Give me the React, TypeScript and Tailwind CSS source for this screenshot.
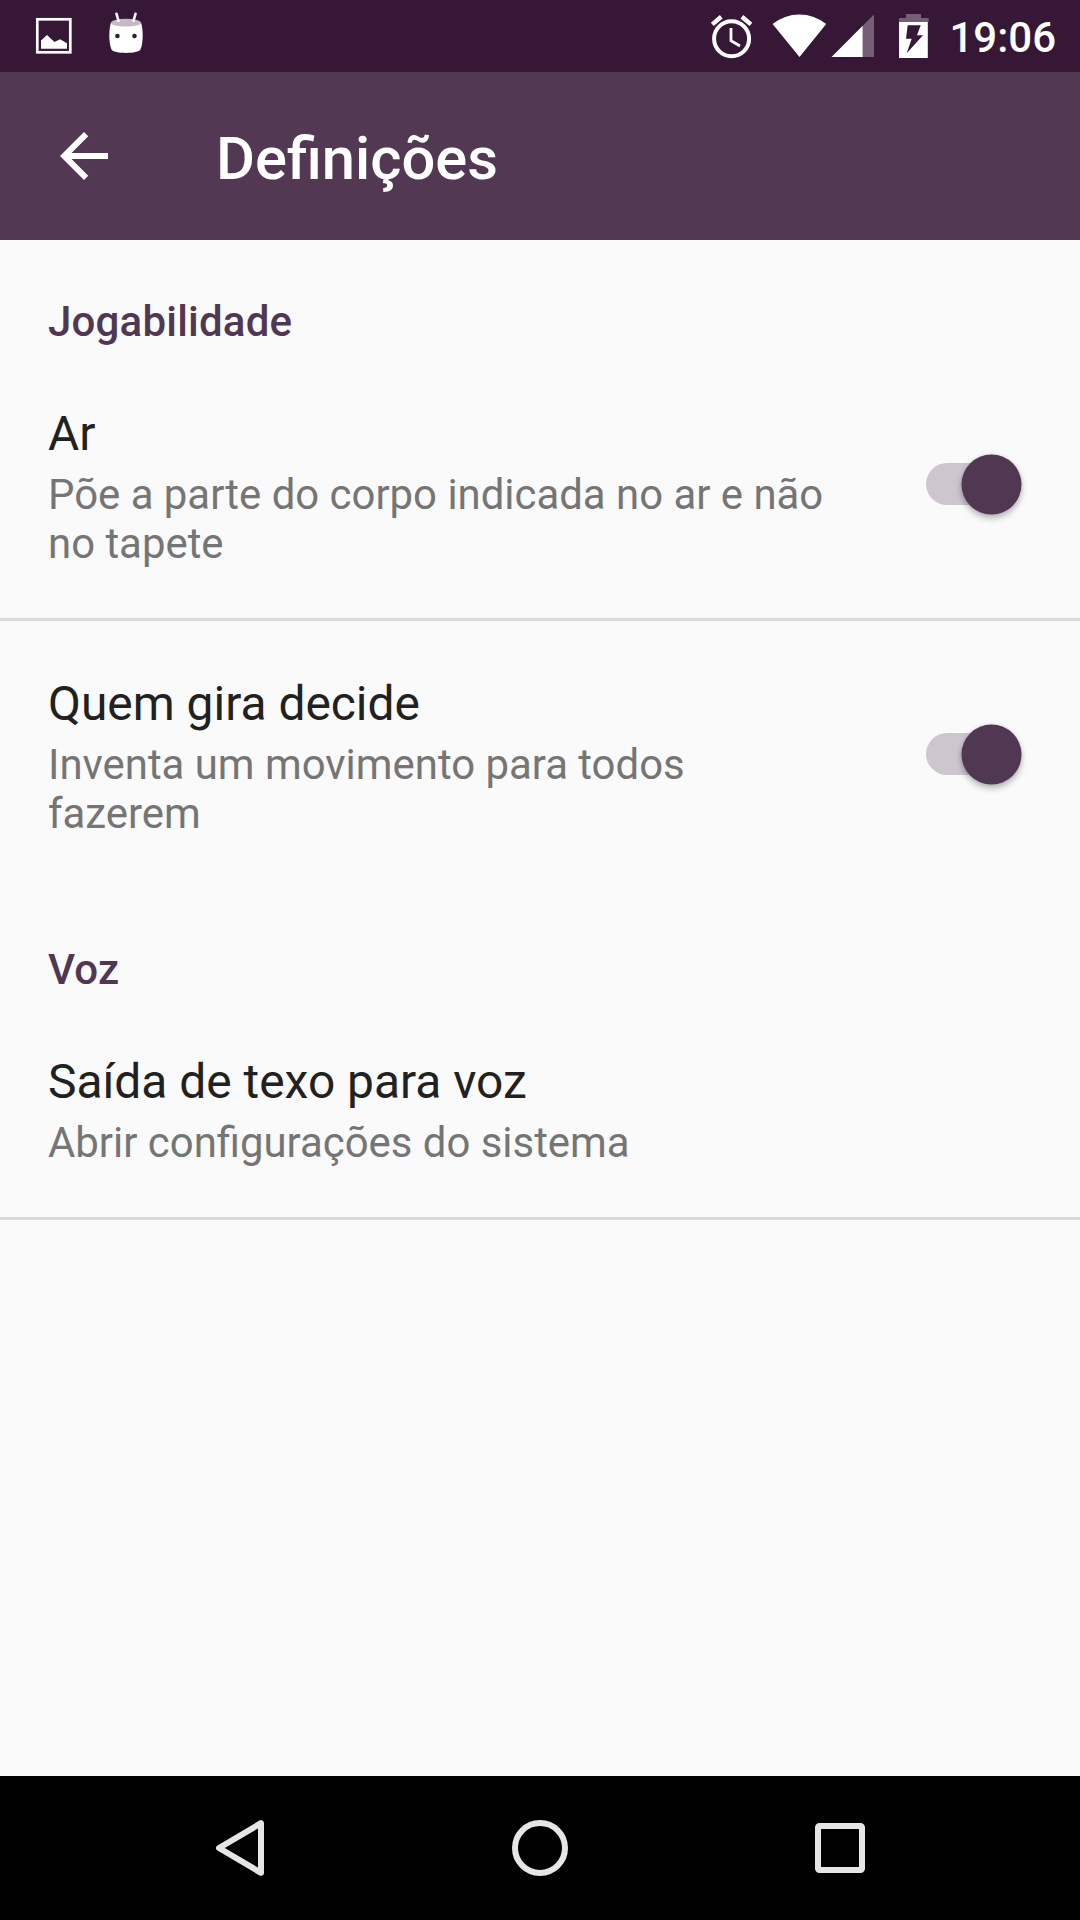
import React from 'react';

function StatusBar() {
  return (
    <div className="flex h-[72px] items-start justify-between bg-[#371736]">
      <div className="flex gap-[34px] pl-[34px]">
        <svg className="h-[72px] w-10" viewBox="34 0 40 72">
          <rect x="37.3" y="19.3" width="33" height="33" fill="none" stroke="#fff" strokeWidth="2.7" />
          <path d="M41 48.7V40.5L47 35l7.5 7 5.5-2.7 7 4v5.4z" fill="#fff" />
        </svg>
        <svg className="h-[72px] w-9" viewBox="108 0 36 72">
          <path
            d="M111 22.5C109 28 108.3 42 111.5 49.5C113.5 54 138.5 54 140.5 49.5C143.7 42 143 28 141 22.5z"
            fill="#fff"
          />
          <ellipse cx="126" cy="22.7" rx="15" ry="3.9" fill="#c4b9c4" />
          <path d="M116.5 13.8l2 7M135.5 13.8l-2 7" stroke="#fff" strokeWidth="2.6" strokeLinecap="round" />
          <circle cx="117.4" cy="36" r="2.3" fill="#2c2230" />
          <circle cx="134.5" cy="36" r="2.3" fill="#2c2230" />
        </svg>
      </div>
      <div className="flex pr-6">
        <svg className="h-[72px] w-[240px]" viewBox="709 0 240 72">
          <g fill="none" stroke="#fff">
            <circle cx="731.6" cy="38.7" r="17.5" strokeWidth="4" />
            <path d="M731 28v12.8l9 5.2" strokeWidth="2.8" />
            <path d="M712.3 24.4l9-7.6M750.9 24.4l-9-7.6" strokeWidth="4.4" />
          </g>
          <path d="M799.5 57L772.6 24A42.5 42.5 0 0 1 826.2 24z" fill="#fff" />
          <path d="M862.7 57V25.8L874 14.5V57z" fill="#765f76" />
          <path d="M831.5 57L862.7 25.8V57z" fill="#fff" />
          <path d="M899 22V18h7V14h15v4h7.7v4z" fill="#765f76" />
          <path
            d="M899 22h28.8v36H899zM907.7 25.3L906 38.7h5.7L906.7 53.3L923 35.3h-6L920.7 25.3z"
            fill="#fff"
            fillRule="evenodd"
          />
        </svg>
        <span className="pt-[13px] text-[42px] leading-[49px] font-medium text-white">19:06</span>
      </div>
    </div>
  );
}

function AppBar() {
  return (
    <header className="flex h-[168px] items-center bg-[#533854] pl-12">
      <svg className="mr-24 size-[72px]" viewBox="0 0 24 24" fill="#fff">
        <path d="M20 11H7.83l5.59-5.59L12 4l-8 8 8 8 1.41-1.41L7.83 13H20v-2z" />
      </svg>
      <h1 className="pt-[7px] text-[59.7px] leading-[71px] font-medium text-white">Definições</h1>
    </header>
  );
}

function SectionTitle({ children }: { children: React.ReactNode }) {
  return (
    <h2 className="px-12 pt-[57px] pb-[5px] text-[42px] leading-[49px] font-medium tracking-[0.2px] text-[#503752]">
      {children}
    </h2>
  );
}

function Switch() {
  return (
    <div role="switch" aria-checked="true" className="relative mr-[11px] mb-px h-[60px] w-[95px]">
      <div className="absolute top-[9px] left-0 h-[42px] w-[84px] rounded-full bg-[#cdc6cf]" />
      <div className="absolute top-0 right-0 size-[60px] translate-x-[0.5px] translate-y-[0.5px] rounded-full bg-[#503752] shadow-[0_4px_6px_rgba(0,0,0,0.25),0_0_4px_rgba(0,0,0,0.1)]" />
    </div>
  );
}

function Preference({ title, summary, toggle = false }: { title: string; summary: string; toggle?: boolean }) {
  return (
    <div className="flex items-center justify-between px-12">
      <div className="w-[786px] pt-[55px] pb-[50px]">
        <div className="text-[47.9px] leading-[56px] text-[#212121]">{title}</div>
        <div className="mt-2 text-[41.9px] leading-[49px] text-[#757575]">{summary}</div>
      </div>
      {toggle && <Switch />}
    </div>
  );
}

function Divider() {
  return <div className="h-[3px] bg-[#dadada]" />;
}

function NavigationBar() {
  return (
    <nav className="flex h-36 items-center justify-center gap-[228px] bg-black">
      <svg className="size-[72px]" viewBox="0 0 72 72" fill="none" stroke="#e6e6e6" strokeWidth="6" strokeLinejoin="round">
        <path d="M57 11.2V60.8L15 36z" />
      </svg>
      <svg className="size-[72px]" viewBox="0 0 72 72" fill="none" stroke="#e6e6e6" strokeWidth="6">
        <circle cx="36" cy="36" r="25" />
      </svg>
      <svg className="size-[72px]" viewBox="0 0 72 72" fill="none" stroke="#e6e6e6" strokeWidth="6">
        <rect x="14" y="14" width="44" height="44" rx="1.5" />
      </svg>
    </nav>
  );
}

export default function App() {
  return (
    <div className="flex h-[1920px] w-[1080px] flex-col overflow-hidden bg-[#fafafa] font-['Roboto',sans-serif]">
      <StatusBar />
      <AppBar />
      <main className="flex-1">
        <SectionTitle>Jogabilidade</SectionTitle>
        <Preference title="Ar" summary="Põe a parte do corpo indicada no ar e não no tapete" toggle />
        <Divider />
        <Preference title="Quem gira decide" summary="Inventa um movimento para todos fazerem" toggle />
        <SectionTitle>Voz</SectionTitle>
        <Preference title="Saída de texo para voz" summary="Abrir configurações do sistema" />
        <Divider />
      </main>
      <NavigationBar />
    </div>
  );
}
